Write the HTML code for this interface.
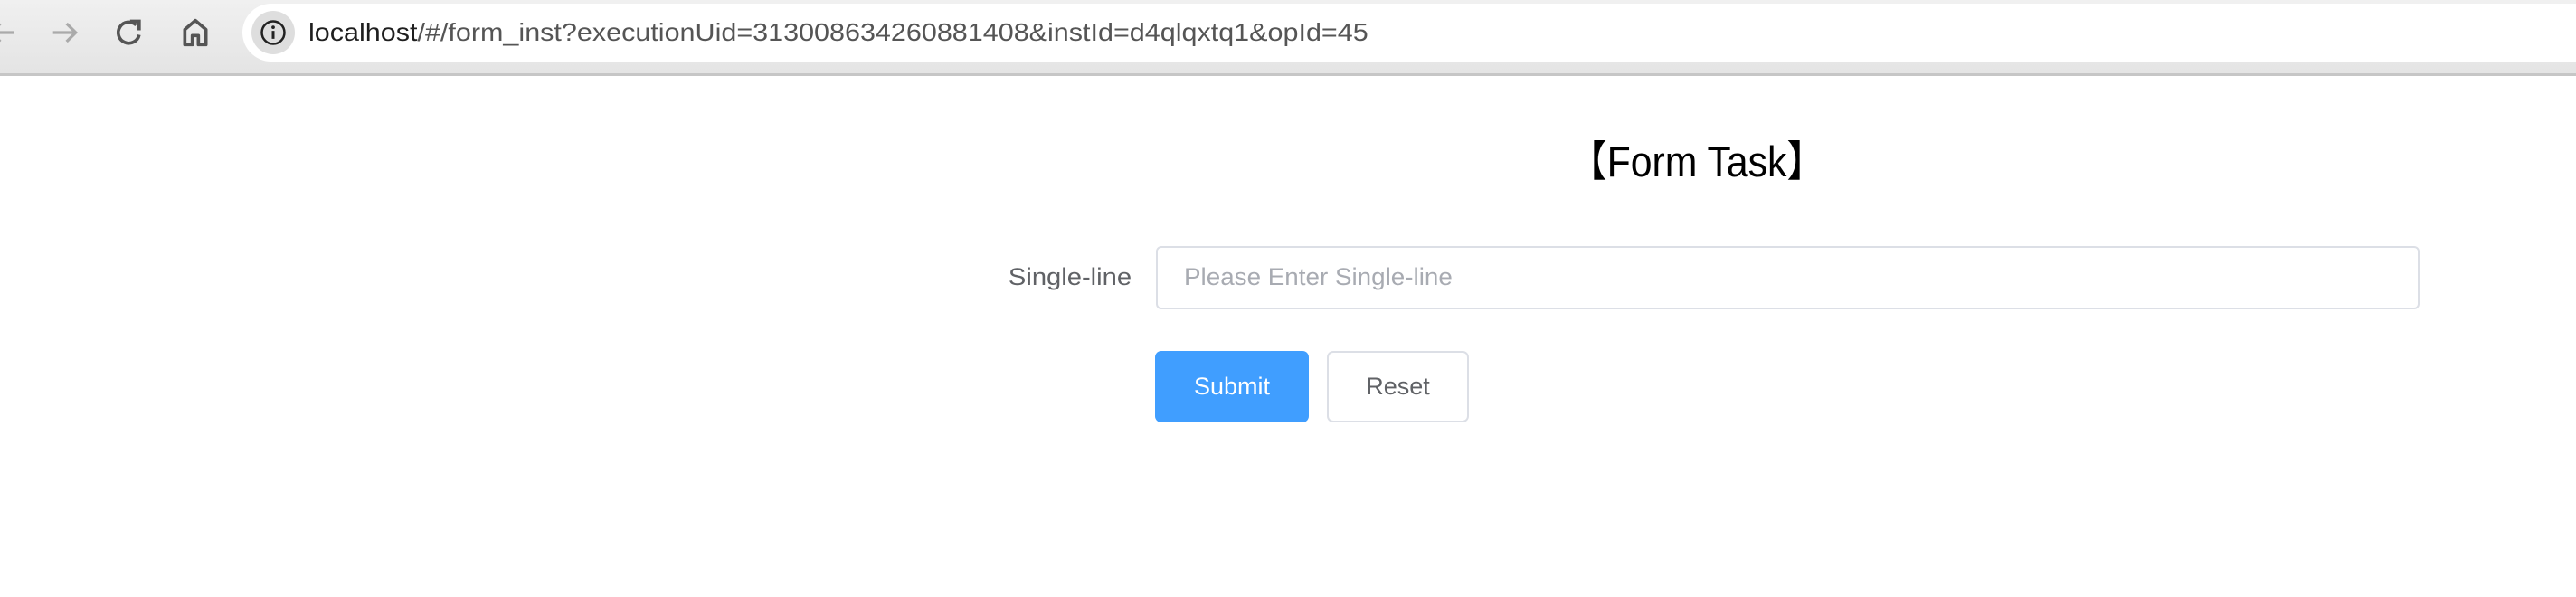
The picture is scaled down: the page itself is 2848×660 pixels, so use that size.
<!DOCTYPE html>
<html><head><meta charset="utf-8"><style>
body{margin:0;width:2848px;height:660px;background:#fff;position:relative;overflow:hidden;font-family:"Liberation Sans",sans-serif}
.tb{position:absolute;left:0;top:0;width:2848px;height:81px;background:linear-gradient(#f0f0f0,#e4e4e4);border-bottom:3px solid #c6c6c6}
.pill{position:absolute;left:268px;top:4px;width:2700px;height:64px;background:#fff;border-radius:32px}
.info{position:absolute;left:278px;top:12px;width:48px;height:48px;border-radius:50%;background:#dedede}
.url{position:absolute;left:341px;top:20px;font-size:28px;color:#555;white-space:nowrap;transform:scaleX(1.09);transform-origin:0 0}
.url b{font-weight:normal;color:#1f1f1f}
svg{position:absolute}
.title{position:absolute;left:1876px;top:140px;font-size:47px;color:#000;white-space:nowrap;transform:translateX(-50%) scaleX(0.91)}
.lab{position:absolute;right:1597px;top:291px;font-size:27px;color:#606266;transform:scaleX(1.08);transform-origin:100% 0}
.inp{position:absolute;left:1278px;top:272px;border:2px solid #dcdfe6;border-radius:6px;box-sizing:border-box;width:1397px;height:70px}
.ph{position:absolute;left:1309px;top:291px;font-size:27px;color:#a8abb2;transform:scaleX(1.03);transform-origin:0 0}
.btn{position:absolute;top:388px;height:79px;border-radius:7px;box-sizing:border-box;font-size:27px;display:flex;align-items:center;justify-content:center}
.sub{left:1277px;width:170px;background:#409eff;color:#fff}
.rst{left:1467px;width:157px;border:2px solid #dcdfe6;color:#606266}
</style></head><body>
<div class="tb">
<svg width="40" height="40" style="left:-18px;top:16px" viewBox="0 0 24 24"><path d="M20 12H5M11 6l-6 6 6 6" fill="none" stroke="#aaa" stroke-width="2"/></svg>
<svg width="40" height="40" style="left:52px;top:16px" viewBox="0 0 24 24"><path d="M4 12h15M13 6l6 6-6 6" fill="none" stroke="#aaa" stroke-width="2"/></svg>
<svg width="40" height="40" style="left:123px;top:16px" viewBox="0 0 24 24"><path d="M18.5 13.5A7 7 0 1 1 16.5 7" fill="none" stroke="#555" stroke-width="2.2"/><path d="M12.5 4.5h6v6" fill="none" stroke="#555" stroke-width="2.2"/></svg>
<svg width="40" height="40" style="left:196px;top:16px" viewBox="0 0 24 24"><path d="M5 20V10l7-6 7 6v10h-5v-6h-4v6z" fill="none" stroke="#555" stroke-width="2.2" stroke-linejoin="round"/></svg>
<div class="pill"></div>
<div class="info"></div>
<svg width="30" height="30" style="left:287px;top:21px" viewBox="0 0 24 24"><circle cx="12" cy="12" r="10" fill="none" stroke="#222" stroke-width="2"/><path d="M12 10.5v7" stroke="#222" stroke-width="2.4"/><circle cx="12" cy="7.3" r="1.5" fill="#222"/></svg>
<div class="url"><b>localhost</b>/#/form_inst?executionUid=313008634260881408&amp;instId=d4qlqxtq1&amp;opId=45</div>
</div>
<div class="title">【Form Task】</div>
<div class="lab">Single-line</div>
<div class="inp"></div>
<div class="ph">Please Enter Single-line</div>
<div class="btn sub">Submit</div>
<div class="btn rst">Reset</div>
</body></html>
